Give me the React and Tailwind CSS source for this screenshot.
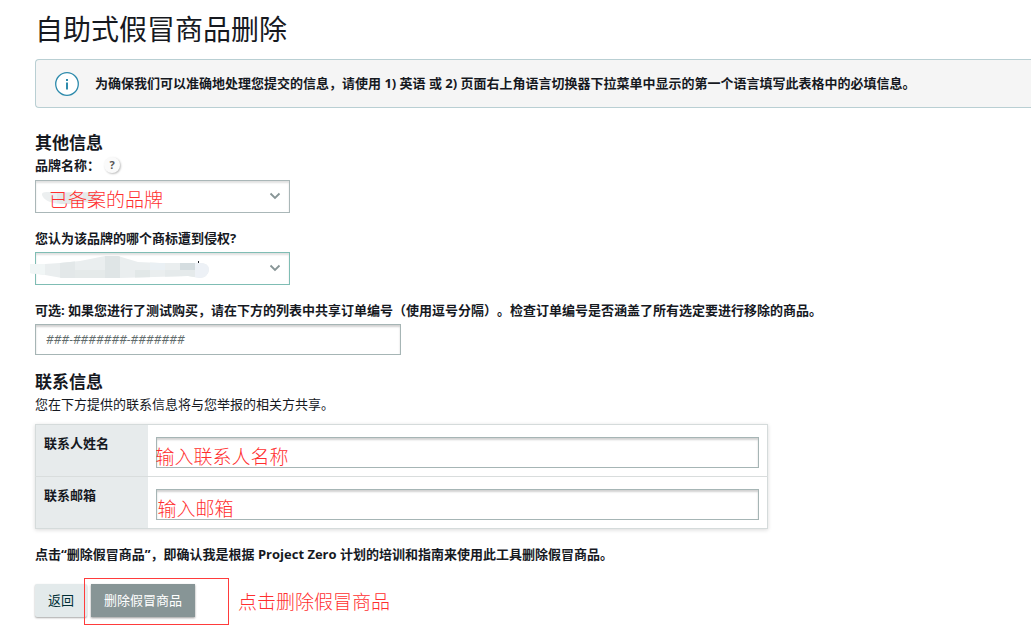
import React from "react";

const fieldClass =
  "block w-full border border-[#a6b5b5] bg-white shadow-[inset_0_2px_2px_rgba(0,0,0,0.18)] outline-none";

function Note({ className, children }) {
  return (
    <span
      className={`pointer-events-none absolute whitespace-nowrap text-[19px] leading-6 font-light text-[#ff2f2f] ${className}`}
    >
      {children}
    </span>
  );
}

function SelectField({ id, borderClass, children }) {
  return (
    <div className="relative mt-1 w-[255px]">
      <select
        id={id}
        className={`block h-[33px] w-full appearance-none border bg-white px-3 shadow-[inset_0_2px_2px_rgba(0,0,0,0.12)] outline-none ${borderClass}`}
      >
        <option value=""></option>
      </select>
      <svg
        className="pointer-events-none absolute top-3 right-[9px] h-2 w-3"
        viewBox="0 0 12 8"
        fill="none"
        stroke="#879596"
        strokeWidth="1.8"
      >
        <path d="M1.5 1.5 L6 6 L10.5 1.5" />
      </svg>
      {children}
    </div>
  );
}

function ContactRow({ id, label, note, noteClass, divided }) {
  return (
    <tr className={divided ? "border-t border-[#d9dddd]" : ""}>
      <th
        scope="row"
        className="w-28 bg-[#e7ebec] px-2 pt-2 text-left align-top font-bold"
      >
        <label htmlFor={id}>{label}</label>
      </th>
      <td className="px-2 pt-3 pb-2">
        <div className="relative">
          <input id={id} type="text" className={`${fieldClass} h-[31px] px-2`} />
          <Note className={noteClass}>{note}</Note>
        </div>
      </td>
    </tr>
  );
}

export default function App() {
  return (
    <main className="overflow-x-hidden bg-white pt-[10px] pb-6 pl-[35px] font-['Open_Sans','Noto_Sans_CJK_SC',sans-serif] text-[13px] leading-5 text-[#16191f] [text-spacing-trim:space-all]">
      <h1 className="text-[28px] leading-[38px] font-normal">自助式假冒商品删除</h1>

      <div
        role="note"
        className="mt-[11px] flex h-[49px] items-center rounded-l border border-r-0 border-[#b9cfd3] bg-[#f5f5f5] pl-[19px]"
      >
        <svg className="h-6 w-6 shrink-0" viewBox="0 0 24 24" fill="none">
          <circle cx="12" cy="12" r="11.3" fill="#fff" stroke="#2e8bac" strokeWidth="1.3" />
          <path d="M11 7h2v2h-2z M11 10.5h2v7h-2z" fill="#2e8bac" />
        </svg>
        <p className="ml-4 pb-0.5 font-bold">
          为确保我们可以准确地处理您提交的信息，请使用 1) 英语 或 2) 页面右上角语言切换器下拉菜单中显示的第一个语言填写此表格中的必填信息。
        </p>
      </div>

      <form onSubmit={(event) => event.preventDefault()}>
        <section className="mt-[23px]">
          <h2 className="text-[17px] leading-6 font-bold">其他信息</h2>
          <div className="flex items-center">
            <label htmlFor="brand" className="font-bold">
              品牌名称：
            </label>
            <button
              type="button"
              className="ml-1 flex h-4 w-4 items-center justify-center rounded-full bg-[#fafafa] text-[11px] leading-4 font-bold text-[#555] shadow-[1px_1px_2px_rgba(0,0,0,0.25)]"
            >
              ?
            </button>
          </div>
          <div className="pt-px">
            <SelectField id="brand" borderClass="border-[#aab7b8]">
              <svg
                className="pointer-events-none absolute top-3 left-[6px] h-3 w-[60px]"
                viewBox="0 0 60 12"
              >
                <path d="M1 3Q0 0 6 0H56Q60 2 58 8L44 10L20 12Q4 11 1 3Z" fill="#eceff0" />
                <path d="M16 1H30V12H20L16 10Z" fill="#e3e8e9" />
                <path d="M42 1H56V9L42 10Z" fill="#e5eaea" />
              </svg>
              <Note className="top-2 left-[14px]">已备案的品牌</Note>
            </SelectField>
          </div>

          <label htmlFor="trademark" className="mt-[15px] block font-bold">
            您认为该品牌的哪个商标遭到侵权?
          </label>
          <SelectField id="trademark" borderClass="border-[#7fbdb4]">
            <svg
              className="pointer-events-none absolute top-1 -left-[5px] h-[23px] w-[180px]"
              viewBox="0 0 180 23"
            >
              <clipPath id="smudge">
                <path d="M0 8H15L30 7L50 5L75 0H88L108 6L130 7H170Q179 7 179 14Q178 21 170 22L158 20L90 22H32L15 19L0 17Z" />
              </clipPath>
              <g clipPath="url(#smudge)">
                <path d="M0 0H180V23H0Z" fill="#eaeeef" />
                <path d="M0 0H15V23H0Z" fill="#f1f6f6" />
                <path d="M30 0H45V23H30Z" fill="#e3e8e9" />
                <path d="M45 14H75V23H45Z" fill="#e5eaea" />
                <path d="M75 0H90V23H75Z" fill="#dfe5e6" />
                <path d="M105 14H120V23H105Z" fill="#e2e8e8" />
                <path d="M120 0H135V14H120Z" fill="#eaf0f4" />
                <path d="M135 14H165V23H135Z" fill="#e5eaeb" />
                <path d="M150 7H165V14H150Z" fill="#d5dde0" />
                <path d="M165 0H180V23H165Z" fill="#edf1f6" />
              </g>
              <path d="M168 5H169V7H168Z" fill="#16191f" />
            </svg>
          </SelectField>

          <label htmlFor="orders" className="mt-[15px] block font-bold">
            可选: 如果您进行了测试购买，请在下方的列表中共享订单编号（使用逗号分隔）。检查订单编号是否涵盖了所有选定要进行移除的商品。
          </label>
          <div className="mt-1 w-[366px]">
            <input
              id="orders"
              type="text"
              placeholder="###-#######-#######"
              className={`${fieldClass} h-[31px] px-[10px] text-xs placeholder:text-[#5f6b6b] placeholder:italic`}
            />
          </div>
        </section>

        <section className="mt-[15px]">
          <h2 className="text-[17px] leading-6 font-bold">联系信息</h2>
          <p>您在下方提供的联系信息将与您举报的相关方共享。</p>
          <table className="mt-[10px] w-[733px] border-collapse border border-[#d5dbdb] shadow-[0_1px_4px_rgba(0,0,0,0.15)]">
            <tbody>
              <ContactRow
                id="contact-name"
                label="联系人姓名"
                note="输入联系人名称"
                noteClass="top-2 left-0"
              />
              <ContactRow
                id="contact-mail"
                label="联系邮箱"
                note="输入邮箱"
                noteClass="top-2 left-[2px]"
                divided
              />
            </tbody>
          </table>
        </section>

        <p className="mt-[15px] font-bold">
          点击“删除假冒商品”，即确认我是根据 Project Zero 计划的培训和指南来使用此工具删除假冒商品。
        </p>

        <div className="mt-5 flex gap-1">
          <button
            type="button"
            className="h-[33px] w-[52px] rounded-xs bg-[#e3eaeb] pb-0.5 text-[#002f36] shadow-[0_1px_2px_rgba(0,0,0,0.35)]"
          >
            返回
          </button>
          <div className="relative">
            <button
              type="submit"
              className="h-[33px] w-[104px] bg-[#879596] pb-0.5 text-white shadow-[0_1px_2px_rgba(0,0,0,0.4)]"
            >
              删除假冒商品
            </button>
            <div className="pointer-events-none absolute -top-[6px] -left-[7px] h-[47px] w-[145px] border border-[#ff3b3b]" />
            <Note className="top-[6px] left-[147px]">点击删除假冒商品</Note>
          </div>
        </div>
      </form>
    </main>
  );
}
